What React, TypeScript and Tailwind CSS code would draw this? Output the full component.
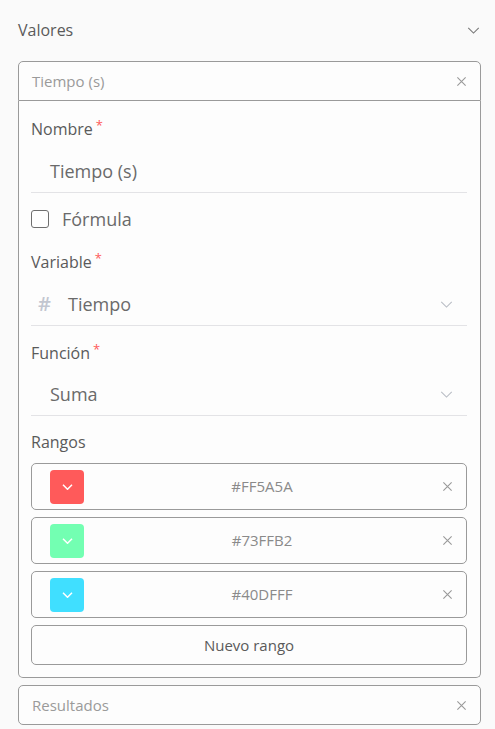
import React from 'react';

const font = { fontFamily: '"Open Sans", "Liberation Sans", sans-serif' };

function XIcon({ className }: { className?: string }) {
  return (
    <svg viewBox="0 0 12 12" className={className} fill="none" stroke="currentColor" strokeWidth={1.2}>
      <path d="M1.5 1.5 L10.5 10.5 M10.5 1.5 L1.5 10.5" />
    </svg>
  );
}

function Chevron({ className, sw = 1.2 }: { className?: string; sw?: number }) {
  return (
    <svg viewBox="0 0 14 8" className={className} fill="none" stroke="currentColor" strokeWidth={sw}>
      <path d="M1 1 L7 7 L13 1" />
    </svg>
  );
}

function Label({ text, required }: { text: string; required?: boolean }) {
  return (
    <div className="flex items-start text-[16px] leading-5 text-[#5a5a5a]">
      {text}
      {required && <span className="ml-[3px] text-[13px] leading-3 text-[#ff5a5a]">*</span>}
    </div>
  );
}

function RangeRow({ color, hex }: { color: string; hex: string }) {
  return (
    <div className="flex h-[47px] items-center rounded-[5px] border border-[#9a9a9a] pl-[18px] pr-[13px]">
      <div className="flex h-[34px] w-[34px] items-center justify-center rounded-[4px]" style={{ backgroundColor: color }}>
        <Chevron className="h-[6px] w-[11px] text-white" sw={2} />
      </div>
      <div className="flex-1 pr-[2px] text-center text-[15px] text-[#8a8a8a]">{hex}</div>
      <XIcon className="h-[11px] w-[11px] text-[#9a9a9a]" />
    </div>
  );
}

export default function App() {
  return (
    <div className="min-h-[729px] w-[495px] bg-[#fafafa] pl-[18px] pr-[14px] pt-[20px]" style={font}>
      <div className="flex items-center justify-between pb-[21px] pr-[1px]">
        <span className="text-[16px] leading-5 text-[#5a5a5a]">Valores</span>
        <Chevron className="h-[7px] w-[13px] text-[#777]" />
      </div>

      <div className="flex h-[40px] items-center justify-between rounded-t-[5px] border border-[#9a9a9a] bg-[#fdfdfd] pl-[13px] pr-[13px]">
        <span className="text-[15px] text-[#9a9a9a]">Tiempo (s)</span>
        <XIcon className="h-[11px] w-[11px] text-[#9a9a9a]" />
      </div>

      <div className="rounded-b-[5px] border border-t-0 border-[#9a9a9a] bg-[#fdfdfd] pb-[12px] pl-[12px] pr-[13px] pt-[18px]">
        <Label text="Nombre" required />
        <div className="mt-[11px] flex h-[43px] items-center border-b border-[#e3e3e6] pl-[19px] text-[18px] text-[#6a6a6a]">
          Tiempo (s)
        </div>

        <div className="mt-[16px] flex items-center">
          <div className="h-[18px] w-[18px] rounded-[3px] border border-[#6f6f6f] bg-white" />
          <span className="ml-[13px] text-[18px] leading-5 text-[#6a6a6a]">Fórmula</span>
        </div>

        <div className="mt-[23px]">
          <Label text="Variable" required />
        </div>
        <div className="mt-[11px] flex h-[43px] items-center border-b border-[#e3e3e6] pl-[7px] pr-[14px]">
          <span className="w-[30px] text-[20px] font-semibold text-[#c2c6d0]">#</span>
          <span className="flex-1 text-[18px] text-[#6a6a6a]">Tiempo</span>
          <Chevron className="h-[7px] w-[13px] text-[#b8bcc4]" />
        </div>

        <div className="mt-[17px]">
          <Label text="Función" required />
        </div>
        <div className="mt-[10px] flex h-[43px] items-center border-b border-[#e3e3e6] pl-[19px] pr-[14px]">
          <span className="flex-1 text-[18px] text-[#6a6a6a]">Suma</span>
          <Chevron className="h-[7px] w-[13px] text-[#b8bcc4]" />
        </div>

        <div className="mt-[16px]">
          <Label text="Rangos" />
        </div>
        <div className="mt-[11px] flex flex-col gap-[7px]">
          <RangeRow color="#ff5a5a" hex="#FF5A5A" />
          <RangeRow color="#73ffb2" hex="#73FFB2" />
          <RangeRow color="#40dfff" hex="#40DFFF" />
          <button className="h-[40px] rounded-[5px] border border-[#9a9a9a] text-[15px] text-[#5a5a5a]">Nuevo rango</button>
        </div>
      </div>

      <div className="mt-[7px] flex h-[40px] items-center justify-between rounded-[5px] border border-[#9a9a9a] bg-[#fdfdfd] pl-[13px] pr-[13px]">
        <span className="text-[15px] text-[#9a9a9a]">Resultados</span>
        <XIcon className="h-[11px] w-[11px] text-[#9a9a9a]" />
      </div>
    </div>
  );
}
